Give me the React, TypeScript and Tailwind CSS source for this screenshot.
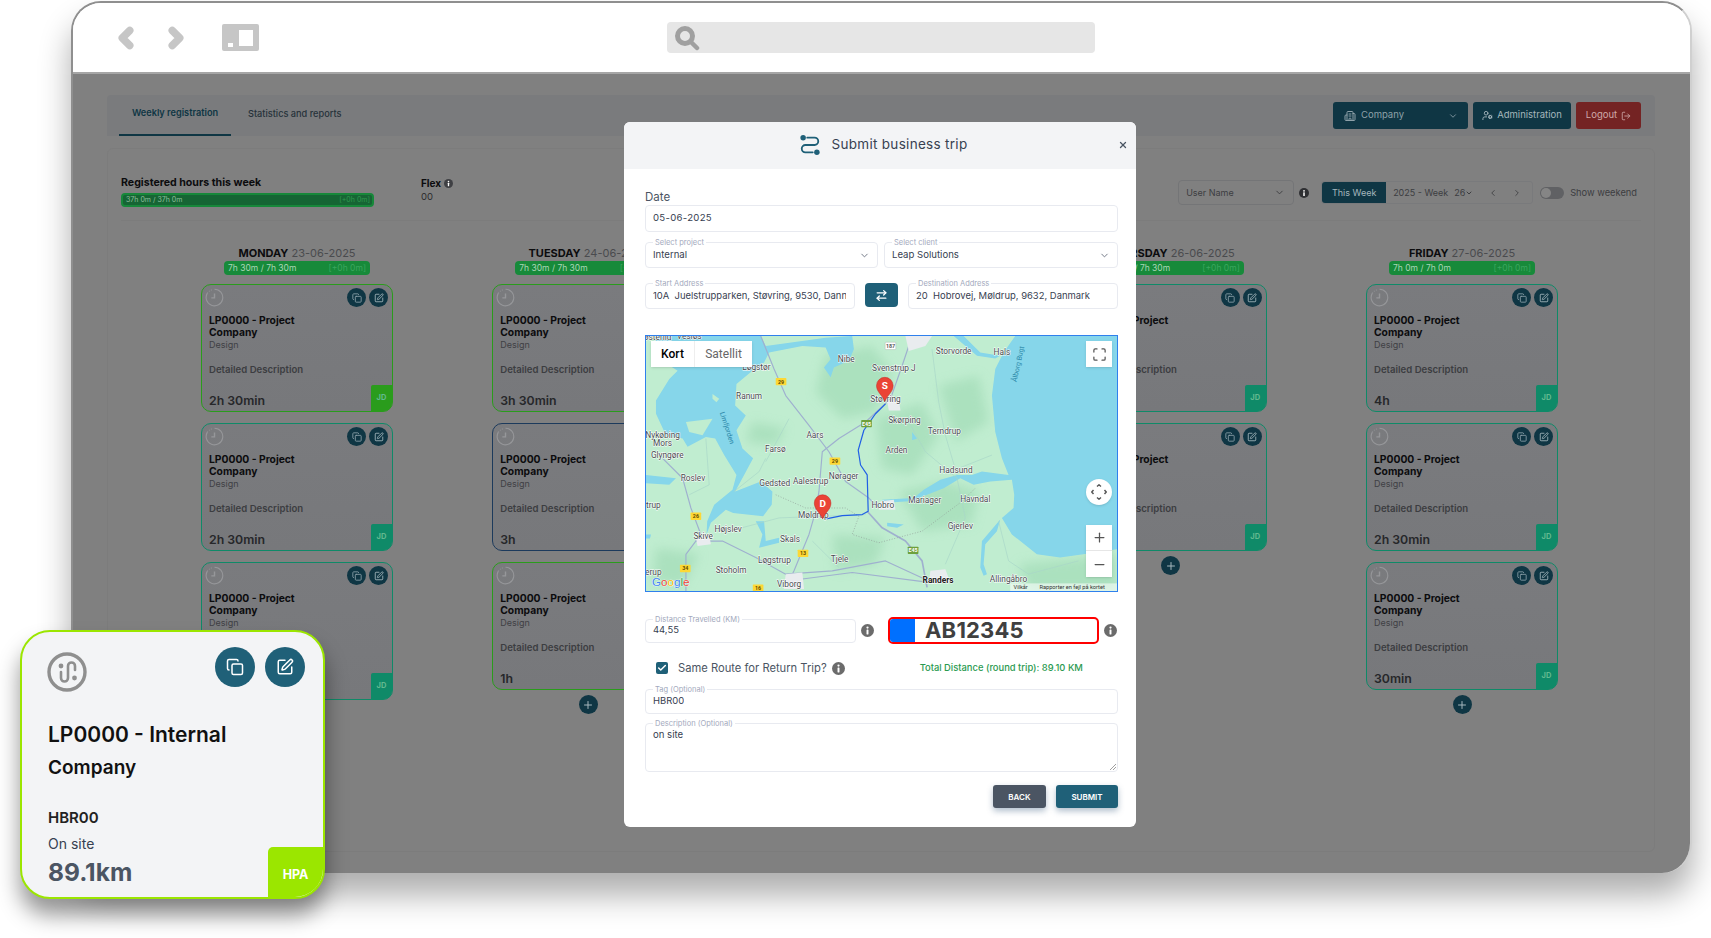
import { ChevronDown, ChevronLeft, ChevronRight, Copy, SquarePen, Plus, Building2, UserCog, LogOut, ArrowRightLeft, X, Check, Minus, Maximize } from "lucide-react";

const tones = {
  green: { border: "border-[#2a9c1c]", corner: "bg-[#2a9c1c]" },
  teal: { border: "border-[#0f8a68]", corner: "bg-[#0f8a68]" },
  navy: { border: "border-[#1c3a5c]", corner: "bg-[#1c3a5c]" },
};

type Tone = keyof typeof tones;

const days: {
  name: string;
  date: string;
  hours: string;
  cards: { tone: Tone; time: string; tall?: boolean }[];
  add?: boolean;
}[] = [
  {
    name: "MONDAY",
    date: "23-06-2025",
    hours: "7h 30m / 7h 30m",
    cards: [
      { tone: "green", time: "2h 30min" },
      { tone: "teal", time: "2h 30min" },
      { tone: "teal", time: "2h 30min", tall: true },
    ],
  },
  {
    name: "TUESDAY",
    date: "24-06-2025",
    hours: "7h 30m / 7h 30m",
    cards: [
      { tone: "green", time: "3h 30min" },
      { tone: "navy", time: "3h" },
      { tone: "green", time: "1h" },
    ],
    add: true,
  },
  {
    name: "WEDNESDAY",
    date: "25-06-2025",
    hours: "7h 30m / 7h 30m",
    cards: [{ tone: "green", time: "3h" }],
  },
  {
    name: "THURSDAY",
    date: "26-06-2025",
    hours: "7h 30m / 7h 30m",
    cards: [
      { tone: "teal", time: "3h" },
      { tone: "teal", time: "4h" },
    ],
    add: true,
  },
  {
    name: "FRIDAY",
    date: "27-06-2025",
    hours: "7h 0m / 7h 0m",
    cards: [
      { tone: "teal", time: "4h" },
      { tone: "teal", time: "2h 30min" },
      { tone: "teal", time: "30min" },
    ],
    add: true,
  },
];

function InfoDot({ size, color }: { size: number; color: string }) {
  return (
    <svg width={size} height={size} viewBox="0 0 16 16" className="shrink-0">
      <circle cx="8" cy="8" r="8" fill={color} />
      <circle cx="8" cy="4.4" r="1.4" fill="#fff" />
      <rect x="6.8" y="6.8" width="2.4" height="6" rx="0.6" fill="#fff" />
    </svg>
  );
}

function ClockMark() {
  return (
    <svg width="19" height="19" viewBox="0 0 24 24" fill="none" stroke="#96979a" strokeWidth="1.4" className="shrink-0">
      <path d="M12 1.5a10.5 10.5 0 1 1-9 5" />
      <path d="M3 6.5 6 3.4 9 2" strokeDasharray="1 2" />
      <path d="M12 7v5.5H8" strokeWidth="1.8" />
    </svg>
  );
}

function WorkCard({ tone, time, tall }: { tone: Tone; time: string; tall?: boolean }) {
  const t = tones[tone];
  return (
    <div className={`relative flex w-[192px] flex-col rounded-[10px] border-[1.5px] bg-gradient-to-b from-[#7a7b7e] to-[#77787b] pb-[3px] ${tall ? "h-[138px]" : "h-[128px]"} ${t.border}`}>
      <div className="flex items-start justify-between pl-[3px] pr-[4px] pt-[3px]">
        <ClockMark />
        <div className="flex gap-[3px]">
          <span className="flex h-[19px] w-[19px] items-center justify-center rounded-full bg-[#0f3644] text-[#8fa4ac]">
            <Copy size={10} />
          </span>
          <span className="flex h-[19px] w-[19px] items-center justify-center rounded-full bg-[#0f3644] text-[#a9bcc2]">
            <SquarePen size={10} />
          </span>
        </div>
      </div>
      <div className="mt-[7px] pl-[7px] text-[10.3px] font-bold leading-[12px] text-[#0c0c0e]">
        LP0000 - Project
        <br />
        Company
      </div>
      <div className="mt-[1px] pl-[7px] text-[9px] leading-[12px] text-[#3f4044]">Design</div>
      <div className="mt-[13px] pl-[7px] text-[9.6px] font-semibold leading-[12px] text-[#3c3d41]">Detailed Description</div>
      <div className="mt-auto pl-[7px] text-[12.3px] font-semibold leading-[14px] text-[#26272a]">{time}</div>
      <div className={`absolute bottom-0 right-0 flex h-[26px] w-[21px] items-center justify-center rounded-br-[8px] rounded-tl-[2px] text-[7.5px] font-bold text-[#62b98f] ${t.corner}`}>
        JD
      </div>
    </div>
  );
}

function FloatField({ label, value, className }: { label: string; value: string; className: string }) {
  return (
    <div className={`relative flex items-center overflow-visible rounded-[4px] border border-[#e8eaf0] pl-[7px] pr-[8px] ${className}`}>
      <span className="absolute -top-[5px] left-[7px] bg-white px-[2px] text-[7.5px] leading-[9px] text-[#a3a9bd]">{label}</span>
      <span className="overflow-hidden whitespace-pre text-[9.45px] text-[#374151]">{value}</span>
    </div>
  );
}

function SelectField({ label, value, className }: { label: string; value: string; className: string }) {
  return (
    <div className={`relative flex items-center justify-between rounded-[4px] border border-[#e8eaf0] pl-[7px] pr-[7px] ${className}`}>
      <span className="absolute -top-[5px] left-[7px] bg-white px-[2px] text-[7.5px] leading-[9px] text-[#a3a9bd]">{label}</span>
      <span className="text-[9.6px] text-[#374151]">{value}</span>
      <ChevronDown size={11} className="text-[#6b7280]" />
    </div>
  );
}

const mapLabels: [string, number, number][] = [
  ["østerild", 35, 12],
  ["Vesløs", 130, 10],
  ["Løgstør", 332, 103],
  ["Nibe", 602, 78],
  ["Svenstrup J", 745, 105],
  ["Storvorde", 925, 55],
  ["Hals", 1070, 58],
  ["Ranum", 310, 189],
  ["Støvring", 720, 201],
  ["Skørping", 777, 264],
  ["Terndrup", 897, 296],
  ["Aars", 508, 308],
  ["Nykøbing", 50, 308],
  ["Mors", 50, 332],
  ["Glyngøre", 64, 368],
  ["Farsø", 389, 351],
  ["Arden", 753, 353],
  ["Nørager", 594, 432],
  ["Roslev", 141, 438],
  ["Hadsund", 932, 414],
  ["Gedsted", 387, 455],
  ["Aalestrup", 495, 449],
  ["Hobro", 712, 519],
  ["Mariager", 838, 505],
  ["Havndal", 990, 501],
  ["trup", 22, 519],
  ["Møldrup", 503, 549],
  ["Højslev", 247, 592],
  ["Gjerlev", 945, 584],
  ["Skive", 172, 613],
  ["Skals", 433, 623],
  ["Tjele", 582, 683],
  ["Løgstrup", 386, 685],
  ["Stoholm", 256, 717],
  ["erup", 22, 724],
  ["Allingåbro", 1090, 743],
  ["Viborg", 430, 758],
];

const mapBadges: [string, number, number, string, string][] = [
  ["29", 406, 138, "#fdd835", "#5f4b00"],
  ["29", 568, 378, "#fdd835", "#5f4b00"],
  ["26", 150, 545, "#fdd835", "#5f4b00"],
  ["13", 472, 657, "#fdd835", "#5f4b00"],
  ["34", 118, 703, "#fdd835", "#5f4b00"],
  ["16", 337, 762, "#fdd835", "#5f4b00"],
  ["E45", 663, 265, "#6ea03c", "#ffffff"],
  ["E45", 803, 648, "#6ea03c", "#ffffff"],
  ["187", 735, 30, "#ffffff", "#555555"],
];

function MapPin({ x, y, letter }: { x: number; y: number; letter: string }) {
  return (
    <g transform={`translate(${x} ${y})`}>
      <path d="M0 48C-6 30-25 20-25 0a25 25 0 0 1 50 0C25 20 6 30 0 48Z" fill="#ea4335" stroke="#c5221f" strokeWidth="1.5" />
      <text x="0" y="11" textAnchor="middle" fontSize="30" fontWeight="700" fill="#fff">{letter}</text>
    </g>
  );
}

function TripMap() {
  return (
    <div className="relative mt-[26px] h-[257px] w-[473px] overflow-hidden border border-[#2f80ed] font-[Roboto,sans-serif]">
      <svg viewBox="0 0 1416 771" className="h-full w-full" preserveAspectRatio="none">
        <defs>
          <filter id="hills" x="-20%" y="-20%" width="140%" height="140%">
            <feGaussianBlur stdDeviation="16" />
          </filter>
          <filter id="coast" x="-5%" y="-5%" width="110%" height="110%">
            <feGaussianBlur stdDeviation="2" />
          </filter>
        </defs>
        <rect width="1416" height="771" fill="#c0edd0" />
        <g fill="#a3dcb7" opacity="0.7" filter="url(#hills)">
          <path d="M540 60 680 30 740 110 690 230 590 250 510 170Z" />
          <path d="M690 250 830 200 880 300 800 420 710 400Z" />
          <path d="M880 150 1000 120 1030 260 930 320Z" />
          <path d="M760 470 900 440 1000 470 980 570 830 590Z" />
          <path d="M30 640 160 660 110 760 20 740Z" />
          <path d="M320 260 420 280 390 330 300 320Z" />
          <path d="M1120 690 1416 660 1416 770 1150 771Z" />
          <path d="M560 600 720 610 690 690 570 710Z" />
        </g>
        <g fill="#86d6ea" filter="url(#coast)">
          <path d="M30 0 345 0 360 30 540 5 620 0 625 40 610 75 565 95 555 125 535 95 555 70 540 35 470 30 370 50 355 80 320 105 272 145 268 210 300 240 272 285 290 340 322 370 295 420 268 470 345 440 380 470 378 510 352 545 262 535 240 525 195 565 182 600 184 560 205 510 260 465 272 420 235 360 208 310 180 305 125 335 110 310 60 300 30 235 30 195 70 130 95 105 25 60Z" />
          <path d="M1110 0 1075 50 1050 100 1040 180 1050 290 1070 370 1090 420 1010 410 980 420 935 420 885 435 835 465 805 490 710 495 710 505 790 500 845 480 895 460 945 430 985 450 1035 440 1100 435 1107 480 1105 520 1070 550 1100 600 1175 660 1245 670 1315 660 1416 645 1416 0Z" />
          <path d="M1065 555 1035 590 1010 620 1005 700 1015 725 1025 720 1015 690 1020 630 1055 590Z" />
          <path d="M925 0 995 60 1050 68 1065 60 1005 50 955 0Z" />
          <path d="M330 560 350 600 340 640 400 625 400 610 360 620 355 560Z" />
          <path d="M0 420 90 430 70 450 0 445Z" />
          <path d="M725 565 775 570 755 580 725 575Z" />
          <path d="M800 290 815 310 800 315Z" />
          <path d="M0 600 15 600 12 612 0 612Z" />
        </g>
        <g fill="#c0edd0">
          <path d="M120 260 200 250 170 300 130 290Z" />
          <path d="M200 175 220 190 212 200 200 190Z" />
        </g>
        <g fill="none" stroke="#9fb0cf" strokeWidth="3.5" strokeLinejoin="round">
          <path d="M345 0 385 100 420 180 490 270 550 350 600 440 670 490 700 520" />
          <path d="M800 0 770 90 735 190 660 260 580 310 530 350 520 470 510 530 490 600 445 710 430 740" />
          <path d="M665 530 710 580 780 620 830 680 845 760" strokeWidth="5" />
          <path d="M50 370 110 430 135 520 165 600 120 660 120 771" />
          <path d="M150 620 230 620 330 670 420 720 560 710 720 680 860 745" />
          <path d="M430 740 620 715 850 745" />
        </g>
        <g fill="none" stroke="#a9d6c8" strokeWidth="2">
          <path d="M360 370 340 410 265 470" />
          <path d="M430 250 360 380" />
          <path d="M790 260 840 350 935 430 960 550 900 690" />
          <path d="M860 40 880 200 900 300 935 420" />
          <path d="M1040 360 940 400" />
          <path d="M250 590 400 550 660 540" />
          <path d="M500 620 580 700" />
          <path d="M1060 560 1090 680 1150 720 1300 680" />
          <path d="M180 310 190 450 130 480" />
        </g>
        <path d="M390 480 480 520 600 520 640 545 620 600 700 625 830 590 950 500 990 460" fill="none" stroke="#8d9a95" strokeWidth="2" strokeDasharray="3 5" />
        <g fill="#e9ecef">
          <path d="M150 610 190 600 195 630 155 635Z" />
          <path d="M420 720 470 715 475 765 415 765Z" />
          <path d="M855 710 900 705 915 745 850 750Z" />
          <path d="M705 500 745 495 750 525 700 525Z" />
          <path d="M780 0 860 0 840 30 790 45Z" />
          <path d="M725 195 760 190 765 225 730 225Z" />
        </g>
        <path d="M720 205 690 235 655 285 638 345 645 390 665 420 668 530 650 540 590 543 545 552 532 548" fill="none" stroke="#1f5fe6" strokeWidth="3.6" strokeLinejoin="round" />
        {mapBadges.map(([label, x, y, fill, color]) => (
          <g key={`${label}-${x}`}>
            <rect x={x - 16} y={y - 11} width="32" height="22" rx="2" fill={fill} stroke={color === "#555555" ? "#999" : "none"} />
            <text x={x} y={y + 6} textAnchor="middle" fontSize="16" fontWeight="700" fill={color}>{label}</text>
          </g>
        ))}
        <g fontSize="25" fill="#454a4d" stroke="#ffffff" strokeWidth="3" style={{ paintOrder: "stroke" }}>
          {mapLabels.map(([label, x, y]) => (
            <text key={label} x={x} y={y} textAnchor="middle">{label}</text>
          ))}
          <text x="878" y="746" textAnchor="middle" fontSize="25" fontWeight="700" fill="#222">Randers</text>
        </g>
        <text transform="translate(222 232) rotate(72)" fontSize="21" fill="#2a87a8">Limfjorden</text>
        <text transform="translate(1114 140) rotate(-78)" fontSize="21" fill="#2a87a8">Ålborg Bugt</text>
        <MapPin x={718} y={150} letter="S" />
        <MapPin x={531} y={505} letter="D" />
        <text x="18" y="757" fontSize="35" fontWeight="500" className="font-[Liberation_Sans,sans-serif]" stroke="#fff" strokeWidth="2" style={{ paintOrder: "stroke" }}>
          <tspan fill="#4285f4">G</tspan>
          <tspan fill="#ea4335">o</tspan>
          <tspan fill="#fbbc05">o</tspan>
          <tspan fill="#4285f4">g</tspan>
          <tspan fill="#34a853">l</tspan>
          <tspan fill="#ea4335">e</tspan>
        </text>
        <rect x="1095" y="748" width="321" height="23" fill="#ffffff" opacity="0.55" />
        <text x="1105" y="766" fontSize="17" fill="#333">Vilkår</text>
        <text x="1183" y="766" fontSize="17" fill="#333">Rapporter en fejl på kortet</text>
      </svg>
      <div className="absolute left-[5px] top-[5px] flex h-[26px] bg-white text-[12px] shadow-sm">
        <span className="flex w-[44px] items-center justify-center border-r border-[#eeeeee] font-medium text-black">Kort</span>
        <span className="flex w-[57px] items-center justify-center text-[#666666]">Satellit</span>
      </div>
      <div className="absolute right-[5px] top-[5px] flex h-[26px] w-[26px] items-center justify-center bg-white text-[#555555] shadow-sm">
        <Maximize size={15} />
      </div>
      <div className="absolute right-[5px] top-[143px] flex h-[26px] w-[26px] items-center justify-center rounded-full bg-white shadow-sm">
        <svg width="16" height="16" viewBox="0 0 16 16" fill="none" stroke="#555" strokeWidth="1.4">
          <path d="M6 2.5 8 .8l2 1.7M6 13.5l2 1.7 2-1.7M2.5 6 .8 8l1.7 2M13.5 6l1.7 2-1.7 2" />
        </svg>
      </div>
      <div className="absolute right-[5px] top-[189px] flex h-[52px] w-[26px] flex-col items-center bg-white text-[#555555] shadow-sm">
        <span className="flex h-[26px] w-full items-center justify-center border-b border-[#e6e6e6]"><Plus size={15} /></span>
        <span className="flex h-[26px] w-full items-center justify-center"><Minus size={15} /></span>
      </div>
    </div>
  );
}

function TripModal() {
  return (
    <div className="absolute left-[624px] top-[122px] flex h-[705px] w-[512px] flex-col overflow-hidden rounded-[6px] bg-white">
      <div className="relative flex h-[47px] shrink-0 items-center justify-center gap-[10px] bg-[#f3f4f6] pb-[2px] pl-[7px]">
        <svg width="22" height="24" viewBox="0 0 24 24" fill="none" stroke="#1f6078" strokeWidth="2">
          <circle cx="4.5" cy="4" r="3" fill="#1f6078" stroke="none" />
          <circle cx="19.5" cy="20" r="3" fill="#1f6078" stroke="none" />
          <path d="M9 4h8a4 4 0 0 1 0 8H7a4 4 0 0 0 0 8h8" strokeLinecap="round" />
        </svg>
        <span className="text-[13.5px] font-normal tracking-[0.3px] text-[#374151]">Submit business trip</span>
        <X size={10} strokeWidth={3} className="absolute right-[8px] top-[18px] text-[#4b5563]" />
      </div>
      <div className="flex flex-col pl-[21px] pr-[18px] pt-[21px]">
        <div className="text-[11.5px] leading-[14px] text-[#4b5563]">Date</div>
        <div className="mt-[1px] flex h-[27px] items-center rounded-[4px] border border-[#e8eaf0] pl-[7px] text-[9.6px] tracking-[0.3px] text-[#374151]">05-06-2025</div>
        <div className="mt-[10px] flex gap-[6px]">
          <SelectField label="Select project" value="Internal" className="h-[26px] w-[233px]" />
          <SelectField label="Select client" value="Leap Solutions" className="h-[26px] w-[234px]" />
        </div>
        <div className="mt-[15px] flex items-start">
          <FloatField label="Start Address" value="10A  Juelstrupparken, Støvring, 9530, Dann" className="h-[26px] w-[210px]" />
          <span className="ml-[10px] flex h-[24px] w-[33px] items-center justify-center rounded-[4px] bg-[#1f6078] text-white">
            <ArrowRightLeft size={13} strokeWidth={2.4} />
          </span>
          <FloatField label="Destination Address" value="20  Hobrovej, Møldrup, 9632, Danmark" className="ml-[10px] h-[26px] w-[210px]" />
        </div>
        <TripMap />
        <div className="mt-[25px] flex h-[27px] items-center">
          <FloatField label="Distance Travelled (KM)" value="44,55" className="h-[24px] w-[211px]" />
          <span className="ml-[5px]"><InfoDot size={13} color="#6b6b6b" /></span>
          <div className="ml-[14px] flex h-[27px] w-[211px] overflow-hidden rounded-[5px] border-2 border-[#ff0000]">
            <span className="w-[25px] bg-[#0070ff]" />
            <span className="ml-[10px] text-[22px] font-bold leading-[23px] tracking-[0.2px] text-[#404040]">AB12345</span>
          </div>
          <span className="ml-[5px]"><InfoDot size={13} color="#6b6b6b" /></span>
        </div>
        <div className="mt-[15px] flex h-[18px] items-center">
          <span className="ml-[11px] flex h-[12px] w-[12px] items-center justify-center rounded-[2px] bg-[#1f6078] text-white">
            <Check size={10} strokeWidth={3.5} />
          </span>
          <span className="ml-[10px] text-[11.2px] text-[#4b5563]">Same Route for Return Trip?</span>
          <span className="ml-[5px]"><InfoDot size={13} color="#6b6b6b" /></span>
          <span className="ml-[75px] text-[9.4px] font-medium text-[#2a9a50]">Total Distance (round trip): 89.10 KM</span>
        </div>
        <FloatField label="Tag (Optional)" value="HBR00" className="mt-[12px] h-[25px]" />
        <div className="relative mt-[9px] h-[49px] rounded-[4px] border border-[#e8eaf0] pl-[7px] pt-[5px] text-[9.6px] leading-[12px] text-[#374151]">
          <span className="absolute -top-[5px] left-[7px] bg-white px-[2px] text-[7.5px] leading-[9px] text-[#a3a9bd]">Description (Optional)</span>
          on site
          <svg width="7" height="7" viewBox="0 0 7 7" className="absolute bottom-[1px] right-[1px]" stroke="#888" strokeWidth="0.8">
            <path d="M7 1 1 7M7 4 4 7" />
          </svg>
        </div>
        <div className="mt-[13px] flex justify-end gap-[10px]">
          <span className="flex h-[23px] w-[53px] items-center justify-center rounded-[3px] bg-[#4b5563] text-[8px] font-semibold text-white shadow-[0_3px_6px_rgba(30,70,110,0.35)]">BACK</span>
          <span className="flex h-[23px] w-[62px] items-center justify-center rounded-[3px] bg-[#1f6078] text-[8px] font-semibold text-white shadow-[0_3px_6px_rgba(30,70,110,0.35)]">SUBMIT</span>
        </div>
      </div>
    </div>
  );
}

function FloatingCard() {
  return (
    <div className="absolute left-[20px] top-[630px] h-[269px] w-[305px] overflow-hidden rounded-[30px] border-2 border-[#9be600] bg-[#f3f4f6] shadow-[0_16px_22px_rgba(0,0,0,0.42)] font-[Inter,sans-serif]">
      <div className="flex h-[59px] items-start justify-between pl-[25px] pr-[18px] pt-[15px]">
        <svg width="40" height="40" viewBox="0 0 40 40" fill="none" stroke="#8f8f8f" className="mt-[5px]">
          <circle cx="20" cy="20" r="18" strokeWidth="3.4" />
          <path d="M14 20v6a3.5 3.5 0 0 0 7 0V14a3.5 3.5 0 0 1 7 0v4" strokeWidth="2.6" strokeLinecap="round" />
          <circle cx="14" cy="14" r="2.4" fill="#8f8f8f" stroke="none" />
          <circle cx="27.5" cy="26" r="2.4" fill="#8f8f8f" stroke="none" />
        </svg>
        <div className="flex gap-[10px]">
          <span className="flex h-[40px] w-[40px] items-center justify-center rounded-full bg-[#1f6078] text-white">
            <Copy size={18} />
          </span>
          <span className="flex h-[40px] w-[40px] items-center justify-center rounded-full bg-[#1f6078] text-white">
            <SquarePen size={18} />
          </span>
        </div>
      </div>
      <div className="mt-[30px] pl-[26px] text-[21px] font-semibold leading-[28px] text-[#111111]">LP0000 - Internal</div>
      <div className="mt-[5px] pl-[26px] text-[19px] font-semibold leading-[28px] text-[#111111]">Company</div>
      <div className="mt-[26px] pl-[26px] text-[15px] font-semibold leading-[20px] text-[#222222]">HBR00</div>
      <div className="mt-[6px] pl-[26px] text-[14px] leading-[20px] text-[#374151]">On site</div>
      <div className="mt-[3px] pl-[26px] text-[24.5px] font-bold leading-[30px] text-[#4b5563]">89.1km</div>
      <div className="absolute bottom-0 right-0 flex h-[50px] w-[55px] items-center justify-center rounded-tl-[5px] bg-[#9be600] pt-[6px] text-[12.5px] font-bold text-white">
        HPA
      </div>
    </div>
  );
}

function BrowserBar() {
  return (
    <div className="flex h-[71px] shrink-0 items-center border-b-2 border-[#a6a6a6] bg-white">
      <ChevronLeft size={30} strokeWidth={6} className="ml-[38px] text-[#c6c6c6]" />
      <ChevronRight size={30} strokeWidth={6} className="ml-[20px] text-[#c6c6c6]" />
      <svg width="37" height="27" viewBox="0 0 37 27" className="ml-[31px]">
        <rect width="37" height="27" rx="2" fill="#c6c6c6" />
        <rect x="17" y="6" width="14" height="16" fill="#fff" />
        <rect x="6" y="19" width="5" height="4" fill="#fff" />
      </svg>
      <div className="ml-[408px] flex h-[31px] w-[428px] items-center rounded-[4px] bg-[#e6e6e6] pl-[7px]">
        <svg width="26" height="26" viewBox="0 0 26 26" fill="none" stroke="#a0a0a0">
          <circle cx="11" cy="11" r="7.5" strokeWidth="5" />
          <path d="M17 17l6 6" strokeWidth="4.5" strokeLinecap="round" />
        </svg>
      </div>
    </div>
  );
}

function Dashboard() {
  return (
    <div className="relative flex-1 bg-[#808080] pl-[34px] pr-[35px] pt-[21px]">
      <div className="flex h-[41px] items-center justify-between rounded-t-[4px] bg-[#7a7b7d] pl-[12px] pr-[14px]">
        <div className="flex h-full text-[9.2px]">
          <span className="flex w-[112px] items-center justify-center border-b-2 border-[#0f3644] pb-[3px] font-semibold text-[#0f3644]">Weekly registration</span>
          <span className="ml-[17px] flex items-center pb-[3px] font-medium text-[#26323a]">Statistics and reports</span>
        </div>
        <div className="flex gap-[5px] text-[9.5px]">
          <span className="flex h-[27px] w-[135px] items-center justify-between rounded-[3px] bg-[#0f3644] pl-[11px] pr-[10px] text-[#8ea1a9]">
            <span className="flex items-center gap-[5px]"><Building2 size={12} />Company</span>
            <ChevronDown size={10} />
          </span>
          <span className="flex h-[27px] w-[98px] items-center justify-center gap-[4px] rounded-[3px] bg-[#0f3644] text-[#a6b7bd]">
            <UserCog size={11} />Administration
          </span>
          <span className="flex h-[27px] w-[65px] items-center justify-center gap-[4px] rounded-[3px] bg-[#742323] text-[#cfa9a9]">
            Logout<LogOut size={10} />
          </span>
        </div>
      </div>
      <div className="mt-[12px] h-[704px] rounded-[6px] border border-[#7c7c7c] px-[13px]">
        <div className="flex h-[72px] items-start justify-between border-b border-[#7c7c7c] pr-[4px] pt-[27px]">
          <div className="flex">
            <div className="w-[253px]">
              <div className="text-[10.6px] font-bold leading-[14px] text-[#0c0c0e]">Registered hours this week</div>
              <div className="mt-[3px] flex h-[14px] items-center justify-between rounded-[4px] border-2 border-[#17883a] bg-[#166534] pl-[3px] pr-[2px] text-[7px] text-[#8fc09d]">
                <span>37h 0m / 37h 0m</span>
                <span className="text-[#2f9a4f]">[+0h 0m]</span>
              </div>
            </div>
            <div className="ml-[47px]">
              <div className="flex items-center gap-[3px] text-[10px] font-bold leading-[14px] text-[#0c0c0e]">Flex <InfoDot size={9} color="#3f4044" /></div>
              <div className="mt-[1px] text-[9.5px] leading-[12px] text-[#2c2c2e]">00</div>
            </div>
          </div>
          <div className="mt-[4px] flex items-center text-[#3c3d40]">
            <span className="flex h-[25px] w-[116px] items-center justify-between rounded-[4px] border border-[#747577] pl-[7px] pr-[8px] text-[9px]">
              User Name <ChevronDown size={11} />
            </span>
            <span className="ml-[5px]"><InfoDot size={10} color="#2e2f32" /></span>
            <div className="ml-[12px] flex h-[23px] w-[212px] items-center rounded-[3px] border border-[#797a7c] text-[9px]">
              <span className="flex h-full w-[64px] items-center justify-center rounded-l-[3px] bg-[#0f3644] text-[#a6b7bd]">This Week</span>
              <span className="ml-[7px]">2025 - Week</span>
              <span className="ml-[6px] flex items-center">26<ChevronDown size={8} strokeWidth={3} /></span>
              <ChevronLeft size={10} className="ml-[15px]" />
              <ChevronRight size={10} className="ml-[14px]" />
            </div>
            <span className="ml-[7px] flex h-[12px] w-[24px] items-center rounded-full bg-[#606164] pl-[1px]">
              <span className="h-[10px] w-[10px] rounded-full bg-[#858585]" />
            </span>
            <span className="ml-[6px] text-[9.3px]">Show weekend</span>
          </div>
        </div>
        <div className="mt-[25px] flex items-start justify-between pl-[80px] pr-[83px]">
          {days.map((day) => (
            <div key={day.name} className="flex w-[192px] flex-col items-center">
              <div className="whitespace-nowrap text-[11px] leading-[14px] text-[#4a4b4e]">
                <span className="font-bold text-[#0c0c0e]">{day.name}</span> {day.date}
              </div>
              <div className="mt-[1px] flex h-[14px] w-[146px] items-center justify-between rounded-[4px] bg-[#178a3a] px-[4px] text-[8.5px] text-[#a9d6b6]">
                <span>{day.hours}</span>
                <span className="text-[#3aa65e]">[+0h 0m]</span>
              </div>
              <div className="mt-[9px] flex flex-col gap-[11px]">
                {day.cards.map((card, i) => (
                  <WorkCard key={i} {...card} />
                ))}
              </div>
              {day.add && (
                <span className="mt-[5px] flex h-[19px] w-[19px] items-center justify-center rounded-full bg-[#0f3644] text-[#a6b7bd]">
                  <Plus size={12} />
                </span>
              )}
            </div>
          ))}
        </div>
      </div>
    </div>
  );
}

export default function App() {
  return (
    <div className="relative h-[938px] w-[1711px] overflow-hidden bg-white pl-[71px] pt-[1px] font-[Inter,sans-serif]">
      <div className="flex h-[872px] w-[1621px] flex-col overflow-hidden rounded-[30px] border-2 border-b-0 border-[#8f8f8f] border-r-[#d0d0d0] bg-white shadow-[0_22px_32px_rgba(0,0,0,0.32)]">
        <BrowserBar />
        <Dashboard />
      </div>
      <TripModal />
      <FloatingCard />
    </div>
  );
}
